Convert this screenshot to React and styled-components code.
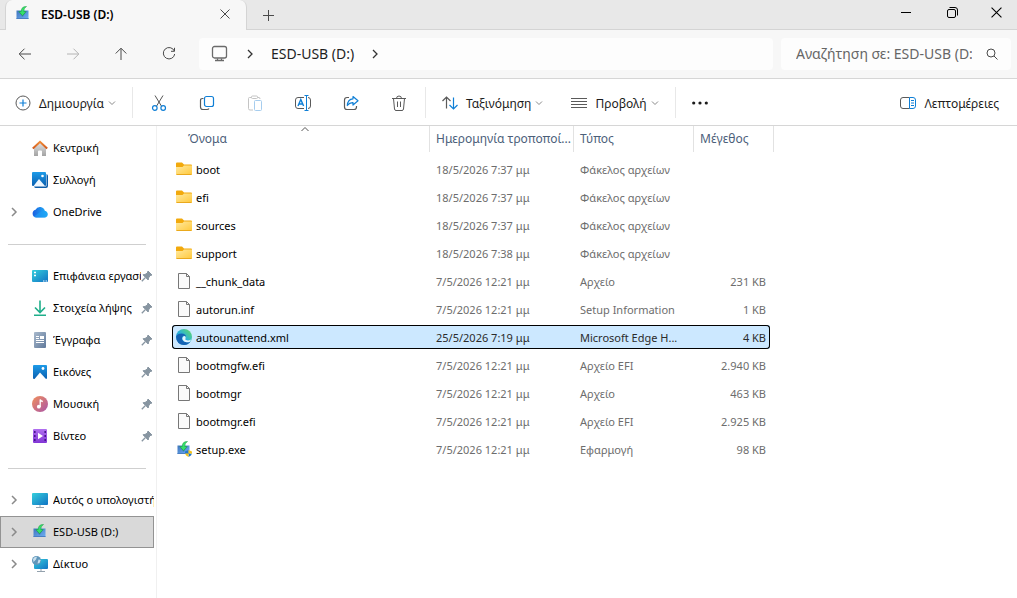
import styled, {createGlobalStyle, css} from "styled-components";

const GlobalStyle = createGlobalStyle`
  * {
    box-sizing: border-box;
  }

  body {
    margin: 0;
    background-color: #ffffff;
    color: #000000;
    font-family: "Noto Sans", "Open Sans", sans-serif;
    font-size: 12px;
    line-height: 16px;
  }

  button,
  input {
    font: inherit;
    color: inherit;
  }

  svg {
    display: block;
    flex-shrink: 0;
  }
`;

const Window = styled.div`
  display: flex;
  flex-direction: column;
  height: 100vh;
  overflow: hidden;
`;

const TitleBar = styled.header`
  display: flex;
  height: 30px;
  padding-left: 5px;
  background-color: #e8e8e8;
  box-shadow: inset 0 -1px 0 #d4d4d4;
`;

const Tab = styled.div`
  display: flex;
  align-items: center;
  width: 242px;
  padding: 0 14px 2px 9px;
  border-right: 1px solid #d4d4d4;
  border-left: 1px solid #d4d4d4;
  border-radius: 7px 7px 0 0;
  background-color: #f7f7f7;
`;

const TabTitle = styled.span`
  flex: 1;
  padding-top: 2px;
  margin-left: 10px;
  font-weight: 600;
`;

const IconButton = styled.button`
  display: flex;
  align-items: center;
  justify-content: center;
  flex-shrink: 0;
  width: ${({$width}) => $width || 48}px;
  padding: 0;
  border: 0;
  background: none;
  color: #4a4a4a;

  &:disabled {
    color: #b4b4b4;
  }
`;

const WindowControls = styled.div`
  display: flex;
  margin-left: auto;
  padding-bottom: 5px;

  ${IconButton} {
    color: #000000;
  }
`;

const NavBar = styled.nav`
  display: flex;
  align-items: stretch;
  height: 49px;
  padding: 8px 6px 8px 1px;
  border-bottom: 1px solid #d6d6d6;
  background-color: #f7f7f7;
`;

const AddressBar = styled.div`
  display: flex;
  flex: 1;
  align-items: center;
  gap: 16px;
  margin: 0 8px 0 6px;
  padding: 0 12px;
  border-radius: 4px;
  background-color: #fdfdfd;
  color: #1f1f1f;
  font-size: 14px;
`;

const AddressLink = styled.a`
  color: inherit;
  text-decoration: none;
`;

const SearchBox = styled.label`
  display: flex;
  align-items: center;
  width: 230px;
  padding: 0 13px 0 15px;
  border-radius: 4px;
  background-color: #fdfdfd;
  color: #4a4a4a;
`;

const SearchInput = styled.input`
  flex: 1;
  min-width: 0;
  margin-right: 14px;
  padding: 0;
  border: 0;
  outline: 0;
  background: none;
  font-size: 14px;

  &::placeholder {
    color: #666666;
    opacity: 1;
  }
`;

const Toolbar = styled.div`
  display: flex;
  align-items: stretch;
  height: 47px;
  padding: 8px 10px 7px 7px;
  border-bottom: 1px solid #d6d6d6;
`;

const ToolbarGroup = styled.div`
  display: flex;
  gap: ${({$gap}) => $gap || 0}px;
  padding: ${({$padding}) => $padding || "0"};
  border-right: 1px solid #e8e8e8;
`;

const ToolbarButton = styled.button`
  display: flex;
  align-items: center;
  gap: 4px;
  margin-left: ${({$end}) => ($end ? "auto" : "0")};
  padding: 0 8px;
  border: 0;
  background: none;
  color: #1b1b1b;
  white-space: nowrap;
`;

const ToolbarLabel = styled.span`
  padding-top: 2px;
  margin-left: 4px;
`;

const Content = styled.div`
  display: flex;
  flex: 1;
  min-height: 0;
`;

const Sidebar = styled.aside`
  flex-shrink: 0;
  width: 157px;
  padding: 6px 2px 0 0;
  border-right: 1px solid #f0f0f0;
  font-size: 11px;
`;

const SidebarItem = styled.a`
  display: flex;
  align-items: center;
  height: 32px;
  padding-right: ${({$pinned}) => ($pinned ? 1 : 0)}px;
  border: solid transparent;
  border-width: 1px ${({$active}) => ($active ? 1 : 0)}px 1px 1px;
  color: inherit;
  text-decoration: none;

  ${({$active}) =>
    $active &&
    css`
      border-color: #939393;
      background-color: #d9d9d9;
    `}
`;

const ExpandSlot = styled.span`
  display: flex;
  justify-content: center;
  flex-shrink: 0;
  width: 26px;
  margin-right: 5px;
`;

const SidebarLabel = styled.span`
  flex: 1;
  margin-left: 5px;
  overflow: hidden;
  white-space: nowrap;
`;

const SidebarDivider = styled.hr`
  height: 1px;
  margin: 16px 8px 15px 8px;
  border: 0;
  background-color: #cfcfcf;
`;

const FileArea = styled.main`
  flex: 1;
  min-width: 0;
  padding-left: 13px;
  overflow: hidden;
`;

const FileTable = styled.table`
  width: 604px;
  border-spacing: 0;
  table-layout: fixed;
`;

const HeaderCell = styled.th`
  position: relative;
  width: ${({$width}) => $width}px;
  height: 26px;
  padding: 0 0 0 ${({$first}) => ($first ? 18 : 6)}px;
  border-right: 1px solid #e2e2e2;
  overflow: hidden;
  color: #4c607a;
  font-weight: 400;
  text-align: left;
  white-space: nowrap;
`;

const SortMark = styled.span`
  position: absolute;
  top: 0;
  left: 50%;
`;

const Spacer = styled.tbody`
  td {
    height: 3px;
    padding: 0;
  }
`;

const Cell = styled.td`
  height: 28px;
  padding: 2px 6px 0 6px;
  border: solid transparent;
  border-width: 2px 0;
  background-clip: padding-box;
  overflow: hidden;
  color: #6d6d6d;
  font-size: 11px;
  text-align: ${({$align}) => $align || "left"};
  white-space: nowrap;

  &:first-child {
    padding: 0 4px;
    border-left-width: 2px;
    color: #000000;
  }

  &:last-child {
    padding-right: 4px;
    border-right-width: 4px;
  }
`;

const FileRow = styled.tr`
  ${({$selected}) =>
    $selected &&
    css`
      ${Cell} {
        background-color: #cce8ff;
        box-shadow: inset 0 1px 0 #000000, inset 0 -1px 0 #000000;
        color: #2b2b2b;
      }

      ${Cell}:first-child {
        border-radius: 4px 0 0 4px;
        box-shadow: inset 0 1px 0 #000000, inset 0 -1px 0 #000000,
          inset 1px 0 0 #000000;
        color: #000000;
      }

      ${Cell}:last-child {
        border-radius: 0 4px 4px 0;
        box-shadow: inset 0 1px 0 #000000, inset 0 -1px 0 #000000,
          inset -1px 0 0 #000000;
      }
    `}
`;

const FileEntry = styled.div`
  display: flex;
  align-items: center;
  gap: 4px;
`;

const FileName = styled.span`
  padding-top: 2px;
`;

const Icon = ({size = 16, children, ...rest}) => (
  <svg
    width={size}
    height={size}
    viewBox={`0 0 ${size} ${size}`}
    fill="none"
    stroke="currentColor"
    aria-hidden="true"
    {...rest}
  >
    {children}
  </svg>
);

const BLUE = "#0f7fd6";

const CloseIcon = ({size = 10}) => (
  <svg width={size} height={size} viewBox="0 0 10 10" stroke="currentColor">
    <path d="M.5.5l9 9M9.5.5l-9 9" />
  </svg>
);
const PlusIcon = () => (
  <Icon size={11}>
    <path d="M5.5 0v11M0 5.5h11" />
  </Icon>
);
const MinimizeIcon = () => (
  <Icon size={11}>
    <path d="M0 5.5h10" />
  </Icon>
);
const RestoreIcon = () => (
  <Icon size={11}>
    <rect x=".5" y="2.500" width="8" height="8" rx="1.500" />
    <path d="M2.500.5H8Q10.500.5 10.500 3v5.500" />
  </Icon>
);
const BackIcon = () => (
  <Icon>
    <path d="M14 8H2.5M7.5 2.7L2.2 8l5.3 5.3" />
  </Icon>
);
const ForwardIcon = () => (
  <Icon>
    <path d="M2 8h11.5M8.5 2.7L13.8 8l-5.3 5.3" />
  </Icon>
);
const UpIcon = () => (
  <Icon>
    <path d="M8 14V2.5M2.7 7.5L8 2.2l5.3 5.3" />
  </Icon>
);
const RefreshIcon = () => (
  <Icon>
    <path d="M13.3 5A5.7 5.7 0 1 0 13.7 8M13.5 1.8V5.3H10" />
  </Icon>
);
const MonitorIcon = () => (
  <Icon size={18} stroke="#6b6b6b">
    <rect x="1.5" y="1.5" width="14" height="11.5" rx="2" strokeWidth="1.3" />
    <path d="M6.5 13.500v2M10.500 13.500v2M4 15.500h9" strokeWidth="1.300" />
  </Icon>
);
const ChevronRight = ({color = "#333333", width = 1.3}) => (
  <Icon size={10} stroke={color} strokeWidth={width}>
    <path d="M3 1l4 4-4 4" />
  </Icon>
);
const ChevronDown = () => (
  <Icon size={8} stroke="#8a8a8a">
    <path d="M1 2.5l3 3 3-3" />
  </Icon>
);
const ChevronUp = () => (
  <Icon size={10} stroke="#555555">
    <path d="M1.5 5L5 1.5 8.5 5" />
  </Icon>
);
const SearchIcon = () => (
  <Icon size={12}>
    <circle cx="5" cy="5" r="4" />
    <path d="M8 8l3.5 3.5" />
  </Icon>
);
const NewIcon = () => (
  <Icon size={16}>
    <circle cx="8" cy="8" r="7" stroke="#5a5a5a" />
    <path d="M8 4.5v7M4.5 8h7" stroke={BLUE} strokeWidth="1.2" />
  </Icon>
);
const CutIcon = () => (
  <Icon>
    <path d="M4 .5l6.4 10.500M12 .5L5.600 11" stroke="#555555" />
    <circle cx="3.8" cy="13" r="2.3" stroke={BLUE} strokeWidth="1.2" />
    <circle cx="12.2" cy="13" r="2.3" stroke={BLUE} strokeWidth="1.2" />
  </Icon>
);
const CopyIcon = () => (
  <Icon>
    <path
      d="M4.500 3.500H3.500Q1.500 3.500 1.500 5.500v6.500Q1.500 14.500 4 14.500H8Q9.500 14.500 10 13.500"
      stroke="#5a5a5a"
      strokeWidth="1.200"
    />
    <rect x="5.5" y="1.5" width="9" height="10" rx="2" stroke={BLUE} strokeWidth="1.2" />
  </Icon>
);
const PasteIcon = () => (
  <Icon>
    <path
      d="M4.500 2.500H2.500Q1.500 2.500 1.500 3.500v10Q1.500 15 3 15H6M10.500 2.500h1.500Q13 2.500 13 4"
      stroke="#c4c4c4"
    />
    <rect x="4.5" y="1" width="6" height="2.5" rx="1" stroke="#c4c4c4" />
    <rect x="7.5" y="5.5" width="7" height="10" rx="1" stroke="#a6cdee" />
  </Icon>
);
const RenameIcon = () => (
  <Icon>
    <path
      d="M9 2.500H3Q.5 2.500.5 5v6Q.5 13.500 3 13.500H9M13 2.500Q15.500 2.500 15.500 5v6Q15.500 13.500 13 13.500"
      stroke="#5a5a5a"
    />
    <path d="M3 11l2.800-6.500L8.600 11M4 9h3.600" stroke={BLUE} strokeWidth="1.400" />
    <path d="M11.500 1v14M9.500.5h4M9.500 15.500h4" stroke={BLUE} />
  </Icon>
);
const ShareIcon = () => (
  <Icon>
    <path
      d="M6 2.500H4Q1.500 2.500 1.500 5v7Q1.500 14.500 4 14.500h7Q13.500 14.500 13.500 12v-1"
      stroke="#5a5a5a"
      strokeWidth="1.200"
    />
    <path
      d="M10 1.500l5 4.300-5 4.200V7.700Q6.500 7.500 4.300 10.500 4.700 4.200 10 3.800z"
      stroke={BLUE}
      strokeWidth="1.200"
      strokeLinejoin="round"
    />
  </Icon>
);
const DeleteIcon = () => (
  <Icon stroke="#5a5a5a">
    <path d="M1 3.500h14M5.500 3.500Q5.500 1 8 1t2.500 2.500M2.500 3.500l1 10.500Q3.700 15.500 5 15.500h6Q12.300 15.500 12.500 14l1-10.500M6.500 6.500v5.500M9.500 6.500v5.500" />
  </Icon>
);
const SortIcon = () => (
  <Icon>
    <path d="M4.500 13.500V2M.5 6l4-4 4 4" stroke="#5a5a5a" strokeWidth="1.200" />
    <path d="M11.500 2.500V14M7.500 10l4 4 4-4" stroke={BLUE} strokeWidth="1.200" />
  </Icon>
);
const ViewIcon = () => (
  <Icon stroke="#5a5a5a">
    <path d="M0 3.500h16M0 6.500h16M0 9.500h16M0 12.500h16" />
  </Icon>
);
const MoreIcon = () => (
  <Icon fill="#1b1b1b" stroke="none">
    <circle cx="1.7" cy="8" r="1.6" />
    <circle cx="8" cy="8" r="1.6" />
    <circle cx="14.3" cy="8" r="1.6" />
  </Icon>
);
const DetailsIcon = () => (
  <Icon>
    <path
      d="M9.500 2.500H3Q.5 2.500.5 5v6Q.5 13.500 3 13.500h6.500"
      stroke="#5a5a5a"
    />
    <path
      d="M9.500 2.500H13Q15.500 2.500 15.500 5v6Q15.500 13.500 13 13.500H9.500zM11 5.500h3M11 8h3M11 10.500h3"
      stroke={BLUE}
    />
  </Icon>
);

const Gradients = () => (
  <svg width="0" height="0" aria-hidden="true">
    <defs>
      <linearGradient id="folder" x1="0" y1="0" x2="1" y2="1">
        <stop offset="0" stopColor="#ffe9a0" />
        <stop offset="1" stopColor="#ffc83a" />
      </linearGradient>
      <linearGradient id="screen" x1="0" y1="0" x2="1" y2="1">
        <stop offset="0" stopColor="#35cfdc" />
        <stop offset="1" stopColor="#1173c4" />
      </linearGradient>
      <linearGradient id="photo" x1="0" y1="0" x2="0" y2="1">
        <stop offset="0" stopColor="#1d9be8" />
        <stop offset="1" stopColor="#0a5fb0" />
      </linearGradient>
      <linearGradient id="roof" x1="0" y1="0" x2="0" y2="1">
        <stop offset="0" stopColor="#f08a35" />
        <stop offset="1" stopColor="#d35a1c" />
      </linearGradient>
      <linearGradient id="wall" x1="0" y1="0" x2="0" y2="1">
        <stop offset="0" stopColor="#e4e4e4" />
        <stop offset="1" stopColor="#a3a3a3" />
      </linearGradient>
      <linearGradient id="cloud" x1="0" y1="0" x2="1" y2="0">
        <stop offset="0" stopColor="#1a5fe0" />
        <stop offset="1" stopColor="#23b6f8" />
      </linearGradient>
      <linearGradient id="doc" x1="0" y1="0" x2="1" y2="1">
        <stop offset="0" stopColor="#a8b9cc" />
        <stop offset="1" stopColor="#60799b" />
      </linearGradient>
      <linearGradient id="music" x1="0" y1="0" x2="1" y2="1">
        <stop offset="0" stopColor="#f2905a" />
        <stop offset="1" stopColor="#a955a8" />
      </linearGradient>
      <linearGradient id="video" x1="0" y1="0" x2="0" y2="1">
        <stop offset="0" stopColor="#b06ff0" />
        <stop offset="1" stopColor="#8236d6" />
      </linearGradient>
      <linearGradient id="drive" x1="0" y1="0" x2="1" y2="1">
        <stop offset="0" stopColor="#3f74bd" />
        <stop offset="1" stopColor="#6fb0f4" />
      </linearGradient>
      <linearGradient id="edge" x1="0" y1="1" x2="1" y2="0">
        <stop offset="0" stopColor="#1173c8" />
        <stop offset=".5" stopColor="#2ab4d8" />
        <stop offset="1" stopColor="#67dc5a" />
      </linearGradient>
    </defs>
  </svg>
);

const HomeIcon = () => (
  <Icon stroke="none">
    <path d="M2 7.5L8 2l6 5.5V16H10v-4.500q0-1-1-1H7q-1 0-1 1V16H2z" fill="url(#wall)" />
    <path d="M.8 8.500L8 1.800l7.200 6.700" stroke="url(#roof)" strokeWidth="2" />
  </Icon>
);
const GalleryIcon = () => (
  <Icon stroke="none">
    <path d="M14.500 2q1.500.5 1.500 2v10q0 2-2 2H4q-1.500 0-2-1.500h11.500q1 0 1-1z" fill="#0c5ca8" />
    <rect width="14" height="14" rx="1" fill="url(#photo)" />
    <path d="M1.500 14L7 7l6 7z" fill="#eef7ff" />
    <circle cx="10.5" cy="4" r="1.3" fill="#ffffff" />
  </Icon>
);
const OneDriveIcon = () => (
  <Icon stroke="none">
    <path d="M4 13.500a4 4 0 0 1-.5-7.800 5 5 0 0 1 9.300 1.100 3.400 3.400 0 0 1-.3 6.700z" fill="url(#cloud)" />
    <path d="M1.500 12.800L9 7.500q2.500-1.500 5 0 2 1.500 2 3-.5 3-3.500 3H4q-1.500 0-2.500-.7z" fill="#1ea0f5" opacity=".6" />
  </Icon>
);
const DesktopIcon = () => (
  <Icon stroke="none">
    <rect y="2" width="16" height="12" rx="1" fill="url(#screen)" />
    <path d="M2 4.500h2M2 7.500h2" stroke="#ffffff" strokeWidth="1.500" />
    <path d="M11 13h1.500M13.500 13h1.500" stroke="#ffffff" />
  </Icon>
);
const DownloadsIcon = () => (
  <Icon stroke="#1fae8a" strokeWidth="1.6">
    <path d="M8 .5v11.500M3 7.500l5 5 5-5M2 15.200h12" />
  </Icon>
);
const DocumentsIcon = () => (
  <Icon stroke="none">
    <rect x="2" y="0" width="12" height="16" rx="1" fill="url(#doc)" />
    <path d="M4 4.500h3M4 6.500h3M4 8.500h8M4 10.500h8" stroke="#ffffff" />
    <rect x="8" y="4" width="4" height="3" fill="#ffffff" />
  </Icon>
);
const PicturesIcon = () => (
  <Icon stroke="none">
    <rect x="1" y="1" width="14" height="14" rx="1" fill="url(#photo)" />
    <path d="M2.500 15L8 8.500l6 6.500z" fill="#ffffff" />
    <circle cx="11" cy="4.5" r="1.4" fill="#ffffff" />
  </Icon>
);
const MusicIcon = () => (
  <Icon stroke="none">
    <circle cx="8" cy="8" r="8" fill="url(#music)" />
    <circle cx="6.8" cy="10.7" r="1.9" fill="#ffffff" />
    <path d="M8.200 11V3.500q.5 1.800 2.600 2" stroke="#ffffff" strokeWidth="1.300" />
  </Icon>
);
const VideoIcon = () => (
  <Icon stroke="none">
    <rect x="1" y="1" width="14" height="14" rx="1" fill="url(#video)" />
    <path d="M2.800 3v11M13.200 3v11" stroke="#43128a" strokeWidth="1.500" strokeDasharray="2 2" />
    <path d="M6 4.800v6.400L11 8z" fill="#ffffff" />
  </Icon>
);
const ComputerIcon = () => (
  <Icon stroke="none">
    <rect y="1" width="16" height="12" rx="1" fill="url(#screen)" />
    <path d="M8 13v2.500M4 15.500h8" stroke="#93a1ad" />
  </Icon>
);
const NetworkIcon = () => (
  <Icon stroke="none">
    <rect x="2" y="3" width="14" height="10" rx="1" fill="url(#screen)" />
    <path d="M9 13v2.500M5 15.500h8" stroke="#93a1ad" />
    <circle cx="4.5" cy="4.5" r="4.500" fill="#5f96ba" />
    <path d="M1 3Q2.500.5 5 .8L4 3.500 1.500 6zM6.500 3.500l2.200.5-1.200 3-2 .5z" fill="#c9e0ee" />
  </Icon>
);
const UsbIcon = ({shield}) => (
  <Icon stroke="none">
    <rect x="1.5" y="4.500" width="12" height="8.500" fill="url(#drive)" />
    <path d="M1.500 12.500h12" stroke="#4a7fc4" />
    <path d="M3.500 5.500h8L7.500 11z" fill="#3262a6" opacity=".5" />
    <path
      d="M11.500.5Q6.300.3 6.200 5.500H3.800l3.700 4.200 3.700-4.200H8.800Q8.500 2.500 11.500.5z"
      fill="#35e069"
      stroke="#139a3b"
      strokeWidth=".5"
    />
    {shield && (
      <>
        <path d="M9 10.500l3.500-1.500v3.500H9zM12.500 12.500H16q-.5 2-3.500 3.500z" fill="#1f78d0" />
        <path d="M12.500 9l3.500 1.500v2h-3.500zM9 12.500h3.500V16Q9.500 14.500 9 12.500z" fill="#f6c51c" />
      </>
    )}
  </Icon>
);
const FolderIcon = () => (
  <Icon stroke="none">
    <path d="M0 2.500Q0 1.500 1 1.500h5l2 2h7q1 0 1 1V8H0z" fill="#f2a90c" />
    <path d="M0 6h6.500L8 4.500h8V13q0 1-1 1H1q-1 0-1-1z" fill="url(#folder)" />
    <path d="M.5 13.500h15" stroke="#eaa91d" />
  </Icon>
);
const FileIcon = () => (
  <Icon stroke="#777777">
    <path d="M2.500.5h8l3 3v12h-11z" fill="#fafafa" />
    <path d="M10.500.5v3h3" />
  </Icon>
);
const EdgeIcon = () => (
  <Icon stroke="none">
    <circle cx="8" cy="8" r="8" fill="url(#edge)" />
    <path d="M.1 7.500Q1.500 4.500 5.500 4.500q4.500 0 4.500 3.500-1-1.500-2.500-1.300Q5.500 7.500 6 10q1 3.500 5 3.300 2 0 3.600-1Q12.500 16 8 16 .5 15.500.1 7.500z" fill="#1563b4" />
    <path d="M8 7q2.200.3 1.500 2.500-.6 1 .5 1.600 2.500 1 4.800-.5l-.4 1.800q-3.400 1.700-6.200.2Q4.500 9.500 8 7z" fill="#e4f4ff" />
  </Icon>
);
const PinIcon = () => (
  <Icon size={12} stroke="#8795a1" fill="#8795a1">
    <path d="M7 1l4 4-2 .6L7.500 8l-.3 2L2 4.800l2-.3L6.400 3z" />
    <path d="M4.200 7.800L.8 11.200" strokeWidth="1.300" />
  </Icon>
);

const quickLinks = [
  {label: "Επιφάνεια εργασίας", icon: DesktopIcon},
  {label: "Στοιχεία λήψης", icon: DownloadsIcon},
  {label: "Έγγραφα", icon: DocumentsIcon},
  {label: "Εικόνες", icon: PicturesIcon},
  {label: "Μουσική", icon: MusicIcon},
  {label: "Βίντεο", icon: VideoIcon}
];

const files = [
  {name: "boot", date: "18/5/2026 7:37 μμ", type: "Φάκελος αρχείων", size: "", icon: FolderIcon},
  {name: "efi", date: "18/5/2026 7:37 μμ", type: "Φάκελος αρχείων", size: "", icon: FolderIcon},
  {name: "sources", date: "18/5/2026 7:37 μμ", type: "Φάκελος αρχείων", size: "", icon: FolderIcon},
  {name: "support", date: "18/5/2026 7:38 μμ", type: "Φάκελος αρχείων", size: "", icon: FolderIcon},
  {name: "__chunk_data", date: "7/5/2026 12:21 μμ", type: "Αρχείο", size: "231 KB", icon: FileIcon},
  {name: "autorun.inf", date: "7/5/2026 12:21 μμ", type: "Setup Information", size: "1 KB", icon: FileIcon},
  {name: "autounattend.xml", date: "25/5/2026 7:19 μμ", type: "Microsoft Edge H...", size: "4 KB", icon: EdgeIcon, selected: true},
  {name: "bootmgfw.efi", date: "7/5/2026 12:21 μμ", type: "Αρχείο EFI", size: "2.940 KB", icon: FileIcon},
  {name: "bootmgr", date: "7/5/2026 12:21 μμ", type: "Αρχείο", size: "463 KB", icon: FileIcon},
  {name: "bootmgr.efi", date: "7/5/2026 12:21 μμ", type: "Αρχείο EFI", size: "2.925 KB", icon: FileIcon},
  {name: "setup.exe", date: "7/5/2026 12:21 μμ", type: "Εφαρμογή", size: "98 KB", icon: () => <UsbIcon shield />}
];

const SidebarLink = ({label, icon: ItemIcon, expandable, pinned, active}) => (
  <SidebarItem href="#" $active={active} $pinned={pinned}>
    <ExpandSlot>
      {expandable && <ChevronRight color="#8a8a8a" width={1.5} />}
    </ExpandSlot>
    <ItemIcon />
    <SidebarLabel>{label}</SidebarLabel>
    {pinned && <PinIcon />}
  </SidebarItem>
);

export default function App() {
  return (
    <Window>
      <GlobalStyle />
      <Gradients />
      <TitleBar>
        <Tab>
          <UsbIcon />
          <TabTitle>ESD-USB (D:)</TabTitle>
          <IconButton $width={14} aria-label="Κλείσιμο καρτέλας">
            <CloseIcon />
          </IconButton>
        </Tab>
        <IconButton $width={42} aria-label="Νέα καρτέλα">
          <PlusIcon />
        </IconButton>
        <WindowControls>
          <IconButton $width={46} aria-label="Ελαχιστοποίηση">
            <MinimizeIcon />
          </IconButton>
          <IconButton $width={46} aria-label="Επαναφορά">
            <RestoreIcon />
          </IconButton>
          <IconButton $width={42} aria-label="Κλείσιμο">
            <CloseIcon size={11} />
          </IconButton>
        </WindowControls>
      </TitleBar>

      <NavBar>
        <IconButton aria-label="Πίσω">
          <BackIcon />
        </IconButton>
        <IconButton aria-label="Εμπρός" disabled>
          <ForwardIcon />
        </IconButton>
        <IconButton aria-label="Επάνω">
          <UpIcon />
        </IconButton>
        <IconButton aria-label="Ανανέωση">
          <RefreshIcon />
        </IconButton>
        <AddressBar>
          <MonitorIcon />
          <ChevronRight />
          <AddressLink href="#">ESD-USB (D:)</AddressLink>
          <ChevronRight />
        </AddressBar>
        <SearchBox>
          <SearchInput
            type="text"
            aria-label="Αναζήτηση"
            placeholder="Αναζήτηση σε: ESD-USB (D:"
          />
          <SearchIcon />
        </SearchBox>
      </NavBar>

      <Toolbar>
        <ToolbarGroup $padding="0 8px 0 0">
          <ToolbarButton>
            <NewIcon />
            <ToolbarLabel>Δημιουργία</ToolbarLabel>
            <ChevronDown />
          </ToolbarButton>
        </ToolbarGroup>
        <ToolbarGroup $padding="0 2px">
          <IconButton aria-label="Αποκοπή">
            <CutIcon />
          </IconButton>
          <IconButton aria-label="Αντιγραφή">
            <CopyIcon />
          </IconButton>
          <IconButton aria-label="Επικόλληση" disabled>
            <PasteIcon />
          </IconButton>
          <IconButton aria-label="Μετονομασία">
            <RenameIcon />
          </IconButton>
          <IconButton aria-label="Κοινή χρήση">
            <ShareIcon />
          </IconButton>
          <IconButton aria-label="Διαγραφή">
            <DeleteIcon />
          </IconButton>
        </ToolbarGroup>
        <ToolbarGroup $padding="0 8px" $gap={12}>
          <ToolbarButton>
            <SortIcon />
            <ToolbarLabel>Ταξινόμηση</ToolbarLabel>
            <ChevronDown />
          </ToolbarButton>
          <ToolbarButton>
            <ViewIcon />
            <ToolbarLabel>Προβολή</ToolbarLabel>
            <ChevronDown />
          </ToolbarButton>
        </ToolbarGroup>
        <IconButton aria-label="Περισσότερα">
          <MoreIcon />
        </IconButton>
        <ToolbarButton $end>
          <DetailsIcon />
          <ToolbarLabel>Λεπτομέρειες</ToolbarLabel>
        </ToolbarButton>
      </Toolbar>

      <Content>
        <Sidebar>
          <SidebarLink label="Κεντρική" icon={HomeIcon} />
          <SidebarLink label="Συλλογή" icon={GalleryIcon} />
          <SidebarLink label="OneDrive" icon={OneDriveIcon} expandable />
          <SidebarDivider />
          {quickLinks.map(link => (
            <SidebarLink key={link.label} {...link} pinned />
          ))}
          <SidebarDivider />
          <SidebarLink label="Αυτός ο υπολογιστής" icon={ComputerIcon} expandable />
          <SidebarLink label="ESD-USB (D:)" icon={UsbIcon} expandable active />
          <SidebarLink label="Δίκτυο" icon={NetworkIcon} expandable />
        </Sidebar>
        <FileArea>
          <FileTable>
            <thead>
              <tr>
                <HeaderCell $width={260} $first>
                  Όνομα
                  <SortMark>
                    <ChevronUp />
                  </SortMark>
                </HeaderCell>
                <HeaderCell $width={144}>Ημερομηνία τροποποί...</HeaderCell>
                <HeaderCell $width={120}>Τύπος</HeaderCell>
                <HeaderCell $width={80}>Μέγεθος</HeaderCell>
              </tr>
            </thead>
            <Spacer>
              <tr>
                <td colSpan={4} />
              </tr>
            </Spacer>
            <tbody>
              {files.map(({icon: TypeIcon, ...file}) => (
                <FileRow key={file.name} $selected={file.selected}>
                  <Cell>
                    <FileEntry>
                      <TypeIcon />
                      <FileName>{file.name}</FileName>
                    </FileEntry>
                  </Cell>
                  <Cell>{file.date}</Cell>
                  <Cell>{file.type}</Cell>
                  <Cell $align="right">{file.size}</Cell>
                </FileRow>
              ))}
            </tbody>
          </FileTable>
        </FileArea>
      </Content>
    </Window>
  );
}
